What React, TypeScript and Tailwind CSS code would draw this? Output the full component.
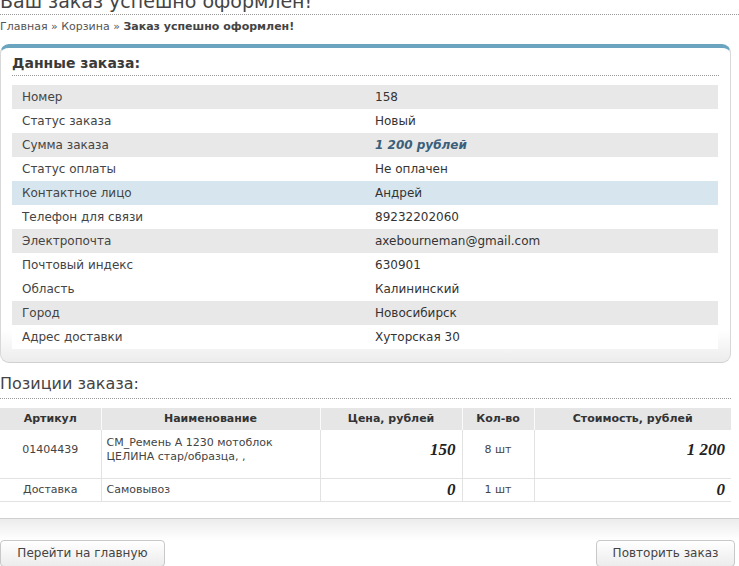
import React from "react";

const rows: { label: string; value: string; bg: string; special?: boolean }[] = [
  { label: "Номер", value: "158", bg: "bg-[#e8e8e8]" },
  { label: "Статус заказа", value: "Новый", bg: "bg-white" },
  { label: "Сумма заказа", value: "1 200 рублей", bg: "bg-[#e8e8e8]", special: true },
  { label: "Статус оплаты", value: "Не оплачен", bg: "bg-white" },
  { label: "Контактное лицо", value: "Андрей", bg: "bg-[#d7e6ee]" },
  { label: "Телефон для связи", value: "89232202060", bg: "bg-white" },
  { label: "Электропочта", value: "axebourneman@gmail.com", bg: "bg-[#e8e8e8]" },
  { label: "Почтовый индекс", value: "630901", bg: "bg-white" },
  { label: "Область", value: "Калининский", bg: "bg-white" },
  { label: "Город", value: "Новосибирск", bg: "bg-[#e8e8e8]" },
  { label: "Адрес доставки", value: "Хуторская 30", bg: "bg-white" },
];

const serif = "text-right pr-[6px] font-['Liberation_Serif',Georgia,serif] font-bold italic text-[17px] leading-none text-[#222]";

export default function App() {
  return (
    <div className="w-[739px] h-[566px] overflow-hidden bg-white text-[#333] font-['DejaVu_Sans',Verdana,sans-serif]">
      {/* Title */}
      <div className="-mt-[11px] text-[19px] leading-[24px] text-[#444] whitespace-nowrap">Ваш заказ успешно оформлен!</div>
      <div className="border-b border-dotted border-[#999] mt-[1px]" />
      <div className="mt-[5px] text-[11px] leading-[14px] text-[#555]">
        Главная » Корзина » <span className="font-bold text-[#444]">Заказ успешно оформлен!</span>
      </div>

      {/* Order data panel */}
      <div className="mt-[10px] w-[731px] rounded-t-[9px] rounded-b-[9px] border-t-[4px] border-t-[#6aa4bf] border-x border-b border-x-[#d8d8d8] border-b-[#d0d0d0] bg-gradient-to-b from-white from-[90%] to-[#ececec] px-[11px] pb-[13px]">
        <div className="pt-[6px] text-[14px] leading-[18px] font-bold text-[#3a3a3a] pb-[3px] border-b border-dotted border-[#999]">
          Данные заказа:
        </div>
        <div className="mt-[9px] w-[706px]">
          {rows.map((r) => (
            <div key={r.label} className={`flex h-[24px] items-center text-[12px] ${r.bg}`}>
              <div className="w-[363px] pl-[10px] text-[#444]">{r.label}</div>
              <div className={r.special ? "font-bold italic text-[#3b5f7a]" : "text-[#333]"}>{r.value}</div>
            </div>
          ))}
        </div>
      </div>

      {/* Positions */}
      <div className="mt-[10px] text-[16px] leading-[22px] text-[#444] w-[731px] pb-[3px] border-b border-dotted border-[#999]">Позиции заказа:</div>

      <table className="mt-[9px] w-[731px] border-collapse table-fixed text-[11px]">
        <colgroup>
          <col className="w-[101px]" />
          <col className="w-[219px]" />
          <col className="w-[142px]" />
          <col className="w-[72px]" />
          <col className="w-[197px]" />
        </colgroup>
        <thead>
          <tr className="h-[22px] bg-[#e6e6e6] font-bold text-[#333]">
            <th className="border-r border-[#fafafa] text-center p-0">Артикул</th>
            <th className="border-r border-[#fafafa] text-center p-0">Наименование</th>
            <th className="border-r border-[#fafafa] text-center p-0">Цена, рублей</th>
            <th className="border-r border-[#fafafa] text-center p-0">Кол-во</th>
            <th className="text-center p-0">Стоимость, рублей</th>
          </tr>
        </thead>
        <tbody className="text-[#444]">
          <tr className="h-[48px] border-b border-[#e2e2e2]">
            <td className="border-r border-[#e2e2e2] text-center pb-[8px]">01404439</td>
            <td className="border-r border-[#e2e2e2] pl-[5px] leading-[14px] pb-[8px]">СМ_Ремень А 1230 мотоблок ЦЕЛИНА стар/образца, ,</td>
            <td className={`border-r border-[#e2e2e2] pb-[8px] ${serif}`}>150</td>
            <td className="border-r border-[#e2e2e2] text-center pb-[8px]">8 шт</td>
            <td className={`pb-[8px] ${serif}`}>1 200</td>
          </tr>
          <tr className="h-[23px] border-b border-[#e2e2e2]">
            <td className="border-r border-[#e2e2e2] text-center leading-[14px]">Доставка</td>
            <td className="border-r border-[#e2e2e2] pl-[5px] leading-[14px]">Самовывоз</td>
            <td className={`border-r border-[#e2e2e2] ${serif}`}>0</td>
            <td className="border-r border-[#e2e2e2] text-center leading-[14px]">1 шт</td>
            <td className={serif}>0</td>
          </tr>
        </tbody>
      </table>

      {/* Footer */}
      <div className="mt-[16px] border-t border-[#cfcfcf] h-[22px] bg-gradient-to-b from-[#ececec] to-white" />
      <div className="flex justify-between w-[735px]">
        <button className="h-[27px] w-[165px] rounded-[4px] border border-[#c8c8c8] bg-gradient-to-b from-white to-[#ececec] text-[12px] text-[#444]">
          Перейти на главную
        </button>
        <button className="h-[27px] w-[139px] rounded-[4px] border border-[#c8c8c8] bg-gradient-to-b from-white to-[#ececec] text-[12px] text-[#444]">
          Повторить заказ
        </button>
      </div>
    </div>
  );
}
